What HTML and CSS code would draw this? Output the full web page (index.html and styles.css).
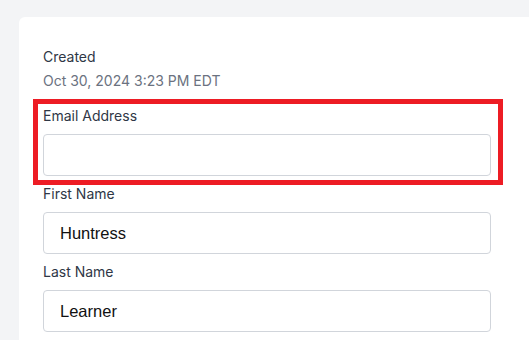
FILE: index.html
```html
<!DOCTYPE html>
<html lang="en">

<head>
    <meta charset="UTF-8">
    <meta name="viewport" content="width=device-width, initial-scale=1.0">
    <title>Learner Details</title>
    <link rel="stylesheet" href="styles.css">
</head>

<body>
    <div class="card">
        <div class="meta">
            <div class="label">Created</div>
            <div class="meta-value">Oct 30, 2024 3:23 PM EDT</div>
        </div>

        <div class="field highlight">
            <label class="label" for="email">Email Address</label>
            <input type="text" id="email" class="text-input">
        </div>

        <div class="field">
            <label class="label" for="firstName">First Name</label>
            <input type="text" id="firstName" class="text-input" value="Huntress">
        </div>

        <div class="field">
            <label class="label" for="lastName">Last Name</label>
            <input type="text" id="lastName" class="text-input" value="Learner">
        </div>
    </div>
</body>

</html>
```

FILE: styles.css
```css
html,
body {
    height: 100%;
}

body {
    margin: 0;
    background-color: #f3f4f6;
    font-family: Inter, "Noto Sans", sans-serif;
    overflow: hidden;
}

.card {
    margin: 17px 0 0 19px;
    height: 100%;
    padding: 30px 24px 0;
    background-color: #fff;
    border-radius: 6px 0 0 0;
    box-sizing: border-box;
}

.label {
    display: block;
    font-size: 14px;
    line-height: 20px;
    font-weight: 400;
    color: #2f3746;
}

.meta {
    display: flex;
    flex-direction: column;
    gap: 4px;
    margin-bottom: 15px;
}

.meta-value {
    font-size: 14px;
    line-height: 20px;
    color: #6b7280;
}

.field {
    display: flex;
    flex-direction: column;
    gap: 8px;
    max-width: 448px;
    margin-bottom: 8px;
}

.text-input {
    height: 42px;
    padding: 0 16px;
    border: 1px solid #d1d5db;
    border-radius: 4px;
    box-sizing: border-box;
    font-family: "Liberation Sans", Arial, sans-serif;
    font-size: 16.5px;
    color: #111;
    background: #fff;
}

/* red annotation box drawn over the email field */
.highlight {
    position: relative;
}

.highlight::after {
    content: "";
    position: absolute;
    top: -7px;
    bottom: -9px;
    left: -10px;
    right: -12px;
    border: 5px solid #ed1c24;
    pointer-events: none;
}
```
